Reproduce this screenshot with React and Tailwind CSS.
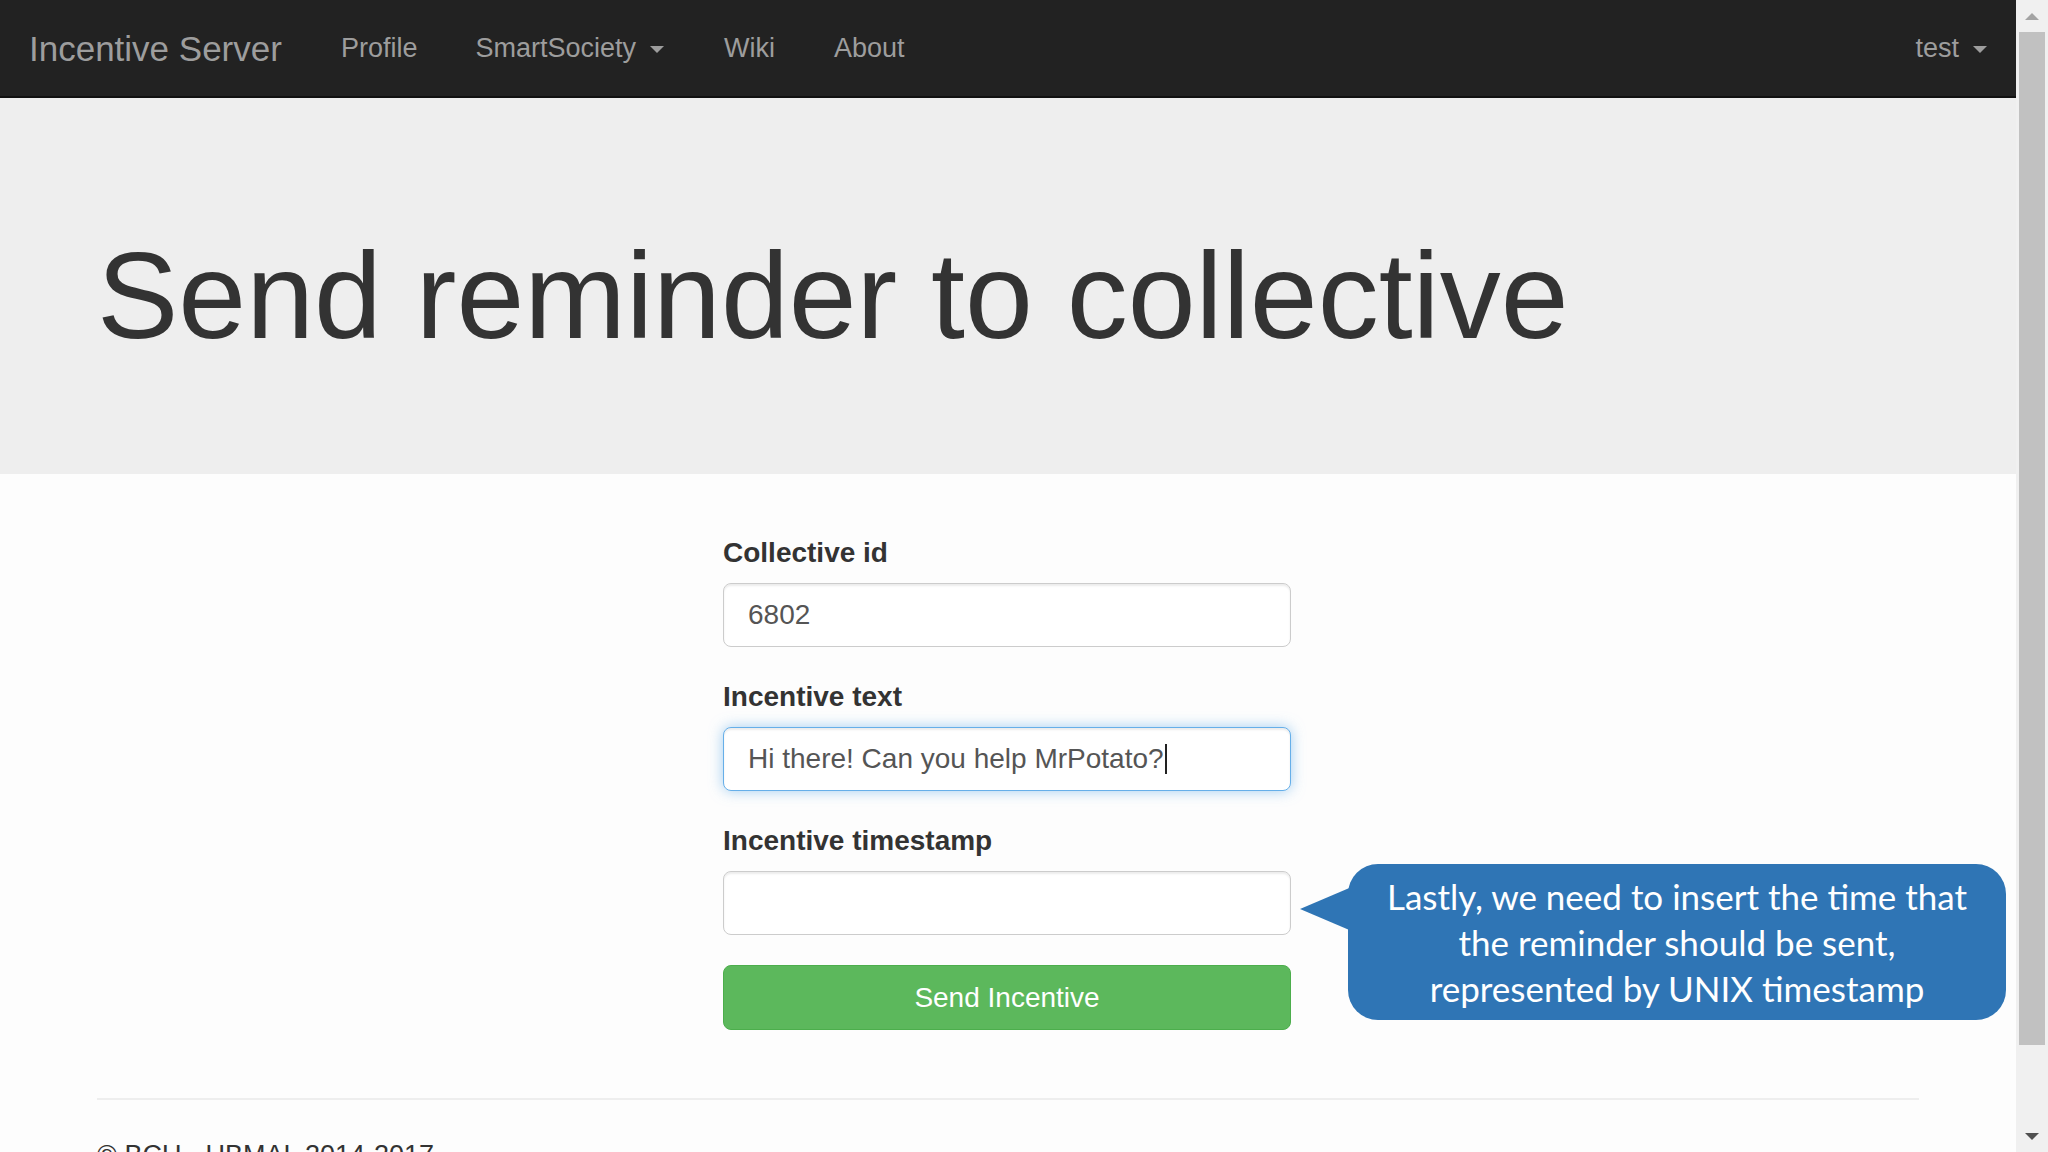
import React from "react";

function Caret({ className = "" }) {
  return (
    <span
      className={
        "inline-block w-0 h-0 border-l-[7px] border-r-[7px] border-t-[7px] border-l-transparent border-r-transparent border-t-[#9d9d9d] " +
        className
      }
    />
  );
}

function Field({ label, children, focused = false }) {
  return (
    <div className="mb-[30px]">
      <div className="text-[28px] leading-[40px] font-bold text-[#333] mb-[10px]">{label}</div>
      <div
        className={
          "h-[64px] rounded-[8px] bg-white flex items-center px-[24px] text-[28px] text-[#555] " +
          (focused
            ? "border border-[#66afe9] shadow-[inset_0_2px_2px_rgba(0,0,0,0.075),0_0_14px_rgba(102,175,233,0.6)]"
            : "border border-[#ccc] shadow-[inset_0_2px_2px_rgba(0,0,0,0.075)]")
        }
      >
        {children}
      </div>
    </div>
  );
}

export default function App() {
  return (
    <div
      className="w-[2048px] h-[1152px] overflow-hidden flex bg-[#fdfdfd]"
      style={{ fontFamily: '"Liberation Sans", Arial, sans-serif' }}
    >
      <div className="flex-1 flex flex-col relative">
        {/* Navbar */}
        <nav className="h-[98px] shrink-0 bg-[#222] border-b-2 border-[#111] flex items-center pl-[29px] text-[#9d9d9d]">
          <span className="text-[35px] leading-none">Incentive Server</span>
          <span className="ml-[59px] text-[27px] leading-none">Profile</span>
          <span className="ml-[58px] text-[27px] leading-none flex items-center">
            SmartSociety
            <Caret className="ml-[14px] mt-[3px]" />
          </span>
          <span className="ml-[60px] text-[27px] leading-none">Wiki</span>
          <span className="ml-[59px] text-[27px] leading-none">About</span>
          <span className="ml-auto mr-[29px] text-[27px] leading-none flex items-center">
            test
            <Caret className="ml-[14px] mt-[3px]" />
          </span>
        </nav>

        {/* Jumbotron */}
        <div className="bg-[#eeeeee] pt-[131px] pb-[111px] shrink-0">
          <div className="w-[1822px] mx-auto">
            <h1 className="text-[122px] leading-[1.1] text-[#333] font-normal">
              Send reminder to collective
            </h1>
          </div>
        </div>

        {/* Form */}
        <div className="w-[1822px] mx-auto pt-[59px]">
          <div className="ml-[626px] w-[568px]">
            <Field label="Collective id">6802</Field>
            <Field label="Incentive text" focused>
              <span>Hi there! Can you help MrPotato?</span>
              <span className="inline-block w-[2px] h-[30px] bg-[#222] ml-[1px]" />
            </Field>
            <Field label="Incentive timestamp" />
            <div className="h-[65px] rounded-[8px] bg-[#5cb85c] border border-[#4cae4c] flex items-center justify-center text-white text-[28px]">
              Send Incentive
            </div>
          </div>

          <div className="mt-[68px] h-[2px] bg-[#eeeeee]" />
          <div className="mt-[36px] text-[27px] leading-[39px] text-[#333]">
            © BCU - UBMAL 2014-2017
          </div>
        </div>

        {/* Callout */}
        <div className="absolute left-[1348px] top-[864px] w-[658px] h-[156px]">
          <svg
            className="absolute left-[-50px] top-[20px]"
            width="56"
            height="50"
            viewBox="0 0 56 50"
          >
            <polygon points="2,25 56,2 56,48" fill="#2f75b5" />
          </svg>
          <div
            className="relative w-full h-full rounded-[30px] bg-[#2f75b5] flex items-center justify-center text-center text-white text-[35px] leading-[46px]"
            style={{ fontFamily: 'Lato, "Open Sans", sans-serif' }}
          >
            <div>
              Lastly, we need to insert the time that
              <br />
              the reminder should be sent,
              <br />
              represented by UNIX timestamp
            </div>
          </div>
        </div>
      </div>

      {/* Scrollbar */}
      <div className="w-[32px] shrink-0 bg-[#f0f0f0] flex flex-col items-center">
        <div className="h-[32px] flex items-center justify-center">
          <span className="inline-block w-0 h-0 border-l-[7px] border-r-[7px] border-b-[7px] border-l-transparent border-r-transparent border-b-[#a3a3a3]" />
        </div>
        <div className="w-[26px] h-[1013px] bg-[#c1c1c1]" />
        <div className="flex-1 flex items-end justify-center pb-[12px]">
          <span className="inline-block w-0 h-0 border-l-[7px] border-r-[7px] border-t-[7px] border-l-transparent border-r-transparent border-t-[#505050]" />
        </div>
      </div>
    </div>
  );
}
